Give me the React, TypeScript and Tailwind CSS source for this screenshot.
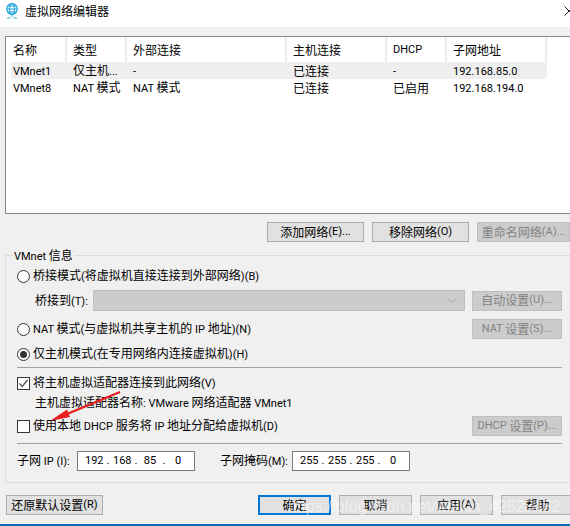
const font = "font-['Noto_Sans_CJK_SC','Noto_Sans',sans-serif]";

// Latin runs are set smaller and in Roboto, the CJK around them stays at 12px
function T({ children }: { children: string }) {
  const parts = children.split(/([\x00-\x7F]+)/).filter(Boolean);
  return (
    <>
      {parts.map((p, i) =>
        /^[\x00-\x7F]/.test(p) ? (
          <span key={i} className="font-['Roboto',sans-serif] text-[11px] whitespace-pre">{p}</span>
        ) : (
          <span key={i}>{p}</span>
        ),
      )}
    </>
  );
}

function Btn({ children, width, disabled, primary }: { children: string; width: string; disabled?: boolean; primary?: boolean }) {
  let look = "border border-[#adadad] bg-[#e1e1e1] text-black";
  if (disabled) look = "border border-[#bfbfbf] bg-[#cccccc] text-[#838383]";
  if (primary) look = "border-2 border-[#0078d7] bg-[#e1e1e1] text-black";
  return (
    <div className={`${width} h-5 pb-[1px] shrink-0 flex items-center justify-center whitespace-nowrap ${look}`}><T>{children}</T></div>
  );
}

function Radio({ checked }: { checked?: boolean }) {
  return (
    <div className="w-[13px] h-[13px] rounded-full border border-[#333333] bg-white shrink-0 flex items-center justify-center">
      {checked && <div className="w-[7px] h-[7px] rounded-full bg-[#333333]" />}
    </div>
  );
}

function Check({ checked }: { checked?: boolean }) {
  return (
    <div className="w-[13px] h-[13px] border border-[#333333] bg-white shrink-0 flex items-center justify-center">
      {checked && (
        <svg width="11" height="11" viewBox="0 0 11 11" fill="none">
          <path d="M1.5 5.5 L4.2 8.4 L9.5 2" stroke="#555555" strokeWidth="1.4" />
        </svg>
      )}
    </div>
  );
}

function Row({ cells, shaded }: { cells: string[]; shaded?: boolean }) {
  return (
    <div className={`ml-[5px] flex h-[17px] w-[536px] items-center whitespace-nowrap ${shaded ? "bg-[#efefef]" : ""}`}>
      <div className="w-[55px] pl-[2px]"><T>{cells[0]}</T></div>
      <div className="w-[60px] pl-[7px]"><T>{cells[1]}</T></div>
      <div className="w-[160px] pl-[7px]"><T>{cells[2]}</T></div>
      <div className="w-[100px] pl-[7px]"><T>{cells[3]}</T></div>
      <div className="w-[60px] pl-[7px]"><T>{cells[4]}</T></div>
      <div className="w-[100px] pl-[7px]"><T>{cells[5]}</T></div>
    </div>
  );
}

function Head({ label, width, first }: { label: string; width: string; first?: boolean }) {
  return (
    <div className={`${width} ${first ? "pl-[7px]" : "pl-[6px]"} h-[25px] pt-[1px] flex items-center border-r-2 border-[#ececec]`}>
      <T>{label}</T>
    </div>
  );
}

function IpBox({ parts }: { parts: string[] }) {
  return (
    <div className="w-[118px] h-5 border border-[#7a7a7a] bg-white flex items-center pl-[7px] font-['Roboto',sans-serif] text-[11px]">
      {parts.map((p, i) => (
        <div key={i} className="flex">
          <span className="w-[18px] text-center">{p}</span>
          {i < 3 && <span className="w-[10px] text-center">.</span>}
        </div>
      ))}
    </div>
  );
}

export default function App() {
  return (
    <div className={`${font} relative w-[570px] h-[526px] overflow-hidden bg-[#f0f0f0] text-[12px] leading-4 text-black flex flex-col`}>
      {/* title bar */}
      <div className="h-[27px] bg-white flex items-center pl-[6px] pb-[5px] shrink-0">
        <svg width="12" height="16" viewBox="0 0 12 16" fill="none" className="mr-[7px]">
          <circle cx="6" cy="6" r="5.3" stroke="#18a0dc" strokeWidth="1.2" />
          <ellipse cx="6" cy="6" rx="2.4" ry="5.3" stroke="#18a0dc" />
          <path d="M0.7 6H11.3M1.5 3H10.5M1.5 9H10.5M6 11V14" stroke="#18a0dc" />
          <path d="M1 15H4.5M7.5 15H11" stroke="#27b5a0" />
        </svg>
        <T>虚拟网络编辑器</T>
        <svg width="10" height="10" viewBox="0 0 10 10" fill="none" className="ml-auto mr-[-4px]">
          <path d="M0.5 0.5L9.5 9.5M9.5 0.5L0.5 9.5" stroke="#222222" />
        </svg>
      </div>

      {/* network list */}
      <div className="ml-[5px] mt-[9px] h-[178px] border border-[#828790] border-r-0 bg-white shrink-0">
        <div className="flex">
          <Head first label="名称" width="w-[61px]" />
          <Head label="类型" width="w-[60px]" />
          <Head label="外部连接" width="w-[160px]" />
          <Head label="主机连接" width="w-[100px]" />
          <Head label="DHCP" width="w-[60px]" />
          <Head label="子网地址" width="w-[100px]" />
        </div>
        <Row shaded cells={["VMnet1", "仅主机...", "-", "已连接", "-", "192.168.85.0"]} />
        <Row cells={["VMnet8", "NAT 模式", "NAT 模式", "已连接", "已启用", "192.168.194.0"]} />
      </div>

      <div className="mt-2 ml-[267px] flex gap-2 shrink-0">
        <Btn width="w-[97px]">添加网络(E)...</Btn>
        <Btn width="w-[97px]">移除网络(O)</Btn>
        <Btn width="w-[93px]" disabled>重命名网络(A)...</Btn>
      </div>

      {/* VMnet info group */}
      <div className="relative ml-[5px] mt-[13px] h-[228px] border border-[#dcdcdc] border-r-0 shrink-0 pl-[11px] pr-[8px]">
        <div className="absolute left-[7px] -top-[9px] bg-[#f0f0f0] px-[1px]"><T>VMnet 信息</T></div>

        <div className="mt-[13px] flex h-[14px] items-center gap-[3px]"><Radio /><span><T>桥接模式(将虚拟机直接连接到外部网络)(B)</T></span></div>

        <div className="mt-[7px] flex items-center h-[21px]">
          <span className="ml-[18px] w-[58px]"><T>桥接到(T):</T></span>
          <div className="w-[372px] h-[21px] bg-[#cccccc] border border-[#bfbfbf] flex items-center justify-end pr-[7px]">
            <svg width="9" height="6" viewBox="0 0 9 6" fill="none"><path d="M0.5 0.5L4.5 4.5L8.5 0.5" stroke="#a8a8a8" /></svg>
          </div>
          <div className="ml-auto"><Btn width="w-[90px]" disabled>自动设置(U)...</Btn></div>
        </div>

        <div className="mt-[8px] flex h-5 items-center gap-[3px]">
          <Radio /><span><T>NAT 模式(与虚拟机共享主机的 IP 地址)(N)</T></span>
          <div className="ml-auto"><Btn width="w-[90px]" disabled>NAT 设置(S)...</Btn></div>
        </div>

        <div className="mt-[8px] flex h-[14px] items-center gap-[3px]"><Radio checked /><span><T>仅主机模式(在专用网络内连接虚拟机)(H)</T></span></div>

        <div className="mt-[6px] h-[1px] bg-[#a0a0a0]" />

        <div className="mt-[8px] flex h-[14px] items-center gap-[3px]"><Check checked /><span><T>将主机虚拟适配器连接到此网络(V)</T></span></div>
        <div className="mt-[6px] ml-[18px] h-[14px] flex items-center"><span><T>主机虚拟适配器名称: VMware 网络适配器 VMnet1</T></span></div>

        <div className="mt-[6px] flex h-5 items-center gap-[3px]">
          <Check /><span><T>使用本地 DHCP 服务将 IP 地址分配给虚拟机(D)</T></span>
          <div className="ml-auto"><Btn width="w-[90px]" disabled>DHCP 设置(P)...</Btn></div>
        </div>

        <div className="mt-[7px] h-[1px] bg-[#a0a0a0]" />

        <div className="mt-[7px] flex items-center h-5">
          <span className="w-[60px]"><T>子网 IP (I):</T></span>
          <IpBox parts={["192", "168", "85", "0"]} />
          <span className="ml-[25px] w-[72px]"><T>子网掩码(M):</T></span>
          <IpBox parts={["255", "255", "255", "0"]} />
        </div>
      </div>

      {/* footer buttons */}
      <div className="mt-[12px] ml-[6px] flex shrink-0">
        <Btn width="w-[97px]">还原默认设置(R)</Btn>
        <div className="ml-[155px] flex gap-2">
          <Btn width="w-[73px]" primary>确定</Btn>
          <Btn width="w-[73px]">取消</Btn>
          <Btn width="w-[73px]">应用(A)</Btn>
          <Btn width="w-[73px]">帮助</Btn>
        </div>
      </div>

      <div className="absolute left-0 right-0 bottom-0 h-[2px] bg-[#0f6cb5]" />

      {/* red arrow annotation */}
      <svg width="80" height="40" viewBox="0 0 80 40" className="absolute left-[45px] top-[388px]" fill="none">
        <path d="M75 4L22 26" stroke="#e81e1e" strokeWidth="2.4" />
        <path d="M5 33L22 21.6L25 29Z" fill="#e81e1e" />
      </svg>

      {/* csdn watermark */}
      <div className="absolute left-[288px] top-[497px] font-['Liberation_Sans',sans-serif] text-[16px] leading-5 text-white/50 whitespace-nowrap">https://blog.csdn.net/weixin_42528482</div>
    </div>
  );
}
